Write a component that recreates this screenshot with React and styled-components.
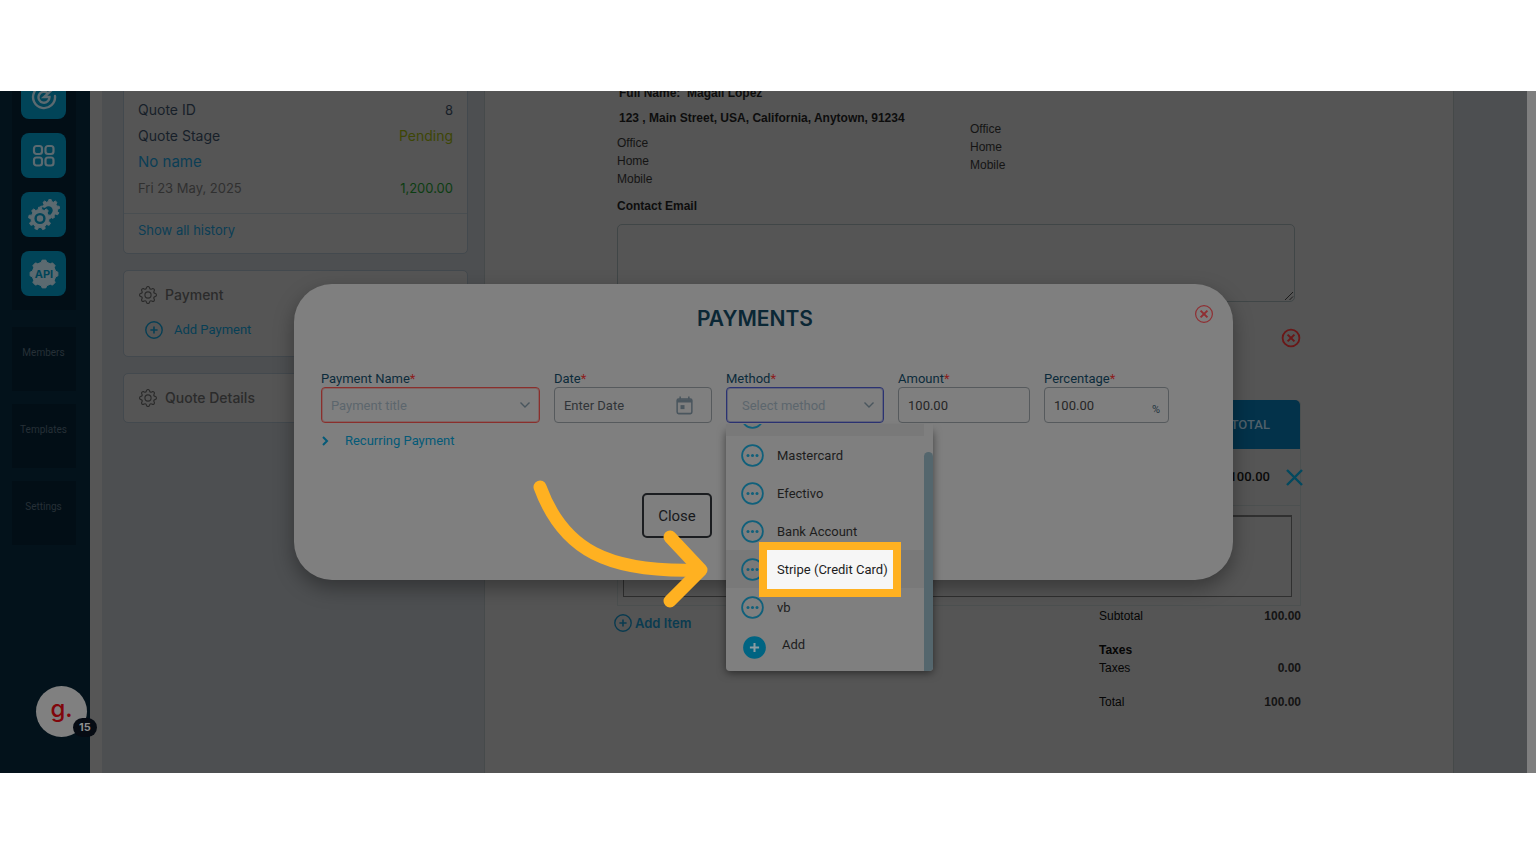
import React from "react";
import styled, { createGlobalStyle, css } from "styled-components";
import { BsGear } from "react-icons/bs";

const GlobalStyle = createGlobalStyle`
  * { box-sizing: border-box; }
  body { margin: 0; background: #fff; font-family: Roboto, "Liberation Sans", sans-serif; }
  button, input, select, textarea { font: inherit; color: inherit; margin: 0; }
  button { border: 0; padding: 0; background: none; cursor: pointer; }
  a { text-decoration: none; }
`;

const display = 'Inter, "Open Sans", sans-serif';
const arial = '"Liberation Sans", Arial, sans-serif';

/* ---------- page frame ---------- */
const Page = styled.div`
  display: flex;
  flex-direction: column;
  min-height: 100vh;
  padding: 91px 0;
`;
const Stage = styled.div`
  position: relative;
  flex: 1;
  display: flex;
  min-height: 682px;
  overflow: hidden;
  background: #4d4f51;
`;

/* ---------- sidebar ---------- */
const Sidebar = styled.nav`
  flex: 0 0 90px;
  display: flex;
  flex-direction: column;
  align-items: center;
  padding-right: 3px;
  background: #03121b;
`;
const AppButtons = styled.div`
  display: flex;
  flex-direction: column;
  gap: 14px;
  align-items: center;
  width: 64px;
  height: 236px;
  margin: -17px 0 0;
  background: #020e16;
`;
const AppButton = styled.button`
  display: grid;
  place-items: center;
  flex: none;
  width: 45px;
  height: 45px;
  border-radius: 8px;
  background: #014458;
`;
const SideLink = styled.a`
  display: grid;
  place-items: center;
  width: 64px;
  height: 64px;
  margin-top: 13px;
  padding-bottom: 14px;
  background: #020e16;
  color: #263037;
  font-size: 10px;
  &:first-of-type { margin-top: 17px; }
`;
const Rail = styled.div`
  flex: 0 0 12px;
  background: #565656;
`;

/* ---------- quote panel ---------- */
const Panel = styled.aside`
  flex: 0 0 383px;
  display: flex;
  flex-direction: column;
  gap: 16px;
  padding: 0 16px 0 21px;
  border-right: 1px solid #464a4b;
`;
const Card = styled.section`
  border: 1px solid #43494e;
  border-radius: 5px;
  background: #555;
  padding: ${p => (p.$flush ? "0" : "14px 15px")};
`;
const HistoryCard = styled(Card)`
  margin-top: -10px;
`;
const Rows = styled.div`
  padding: 15px 14px 12px;
  border-bottom: 1px solid #494e51;
`;
const Row = styled.div`
  display: flex;
  justify-content: space-between;
  font: 400 ${p => p.$size || 14}px/26px ${display};
  color: ${p => p.$color || "#171f29"};
`;
const Small = styled.span`
  font-size: ${p => p.$size || 13}px;
  color: ${p => p.$color};
`;
const HistoryLink = styled.a`
  display: block;
  padding: 3px 14px 10px;
  font: 400 13px/26px ${display};
  color: #0b3e55;
`;
const CardTitle = styled.h2`
  display: flex;
  align-items: center;
  gap: 8px;
  margin: 0;
  font: 500 14px/20px ${display};
  color: #2b2b2b;
`;
const AddPayment = styled.button`
  display: flex;
  align-items: center;
  gap: 11px;
  margin: 15px 0 2px 6px;
  font-size: 13px;
  line-height: 20px;
  color: #073f55;
`;

/* ---------- quote document ---------- */
const Doc = styled.main`
  flex: 1;
  min-width: 0;
  padding: 0 152px 0 132px;
  background: #555;
  font: 400 12px/18px ${arial};
  color: #141414;
`;
const Contacts = styled.div`
  display: grid;
  grid-template-columns: 353fr 331fr;
  margin-top: -8px;
  white-space: nowrap;
`;
const Strong = styled.div`
  font-weight: 700;
  line-height: 20px;
  padding-left: 2px;
  margin-bottom: 5px;
  color: #0d0d0d;
`;
const Lines = styled.div`
  padding-top: ${p => p.$top || 1}px;
`;
const EmailLabel = styled.label`
  display: block;
  margin: 8px 0 8px;
  font-weight: 700;
  line-height: 20px;
  color: #0d0d0d;
`;
const EmailBox = styled.textarea`
  display: block;
  width: calc(100% - 6px);
  height: 78px;
  border: 1px solid #404647;
  border-radius: 5px;
  background: transparent;
  resize: none;
`;
const EmailWrap = styled.div`
  position: relative;
`;
const Grip = styled.svg`
  position: absolute;
  right: 7px;
  bottom: 1px;
`;
const RemoveRow = styled.div`
  display: flex;
  justify-content: flex-end;
  padding: 26px 0 52px;
`;
const IconButton = styled.button`
  display: block;
  line-height: 0;
  flex: none;
`;
const Items = styled.table`
  width: 100%;
  border-spacing: 0;
  border: 1px solid #4c5050;
  border-top: 0;
  border-radius: 5px 5px 0 0;
`;
const Head = styled.th`
  height: 49px;
  padding: 0 30px;
  text-align: right;
  border-radius: 5px 5px 0 0;
  background: #03324a;
  color: #50616b;
  font: 500 13px/18px Roboto, sans-serif;
`;
const Cell = styled.td`
  padding: 0;
  ${p => p.$line && css`height: 57px; border-bottom: 1px solid #4c5050;`}
`;
const Amount = styled.div`
  display: flex;
  justify-content: flex-end;
  align-items: center;
  gap: 16px;
  margin-right: -3px;
  color: #090909;
  font: 500 13px/18px Roboto, sans-serif;
`;
const Note = styled.textarea`
  display: block;
  width: calc(100% - 13px);
  height: 82px;
  margin: 9px 7px 8px 5px;
  border: 1px solid #303030;
  border-top-width: 2px;
  background: transparent;
  resize: none;
`;
const Bottom = styled.div`
  display: flex;
  justify-content: space-between;
  align-items: flex-start;
`;
const AddItem = styled.button`
  display: flex;
  align-items: center;
  gap: 3px;
  margin: 7px 0 0 -3px;
  font: 600 13px/20px ${display};
  color: #0a3b50;
`;
const Totals = styled.dl`
  display: grid;
  grid-template-columns: 1fr auto;
  width: 202px;
  margin: 1px 0 0;
`;
const Term = styled.dt`
  margin-top: ${p => (p.$spaced ? 16 : 0)}px;
  font-weight: ${p => (p.$bold ? 700 : 400)};
  color: #050505;
`;
const Value = styled.dd`
  margin: ${p => (p.$spaced ? 16 : 0)}px 0 0;
  text-align: right;
  font-weight: 700;
  color: #141414;
`;
const Gutter = styled.div`
  flex: 0 0 74px;
  border-left: 1px solid #454949;
  background: #4d4f51;
`;
const ScrollStrip = styled.div`
  flex: 0 0 9px;
  background: #7f7f7f;
`;

/* ---------- payments dialog ---------- */
const Overlay = styled.div`
  position: absolute;
  inset: 0 9px 0 0;
  display: flex;
  align-items: center;
  justify-content: center;
`;
const Dialog = styled.div`
  width: 61.5%;
  min-width: 860px;
  border-radius: 38px;
  background: #7f7f7f;
  box-shadow: 0 8px 20px rgba(0, 0, 0, 0.35);
  padding-bottom: 42px;
`;
const DialogHead = styled.header`
  display: flex;
  align-items: flex-start;
  padding: 20px 19px 0 22px;
`;
const DialogTitle = styled.h1`
  flex: 1;
  margin: 0;
  text-align: center;
  font: 600 21px/30px ${display};
  color: #0b2735;
`;
const Columns = styled.div`
  display: grid;
  grid-template-columns: 219fr 158fr 158fr 132fr 125fr;
  column-gap: 14px;
  padding: 0 64px 0 27px;
`;
const Fields = styled(Columns)`
  margin-top: 37px;
`;
const Field = styled.div`
  position: relative;
  min-width: 0;
`;
const Label = styled.label`
  display: block;
  font-size: 13px;
  line-height: 16px;
  color: #0c2b3b;
  white-space: nowrap;
`;
const Req = styled.span`
  color: #8c1c1c;
`;
const Box = styled.div`
  position: relative;
  display: flex;
  align-items: center;
  height: 36px;
  border: 1px solid ${p => p.$border || "#565a5d"};
  border-radius: 4px;
  box-shadow: ${p => (p.$border ? `inset 0 0 0 1px ${p.$border}55` : "none")};
  color: #262626;
  font-size: 13px;
`;
const Input = styled.input`
  width: 100%;
  height: 100%;
  padding: 0 9px;
  border: 0;
  outline: 0;
  background: none;
  &::placeholder { color: #303438; opacity: 1; }
`;
const Select = styled.select`
  width: 100%;
  height: 100%;
  padding: 0 ${p => p.$pad || 9}px;
  border: 0;
  outline: 0;
  background: none;
  appearance: none;
  color: #5c666d;
`;
const Trailing = styled.span`
  position: absolute;
  right: ${p => p.$right || 8}px;
  display: flex;
  pointer-events: none;
  color: #4a565e;
`;
const Percent = styled(Trailing)`
  bottom: 4px;
  font-size: 11px;
  line-height: 16px;
  color: #1f3440;
`;
const Recurring = styled.button`
  display: flex;
  align-items: center;
  gap: 16px;
  margin: 8px 0 0 28px;
  font-size: 13px;
  line-height: 20px;
  color: #045a78;
`;
const Footer = styled(Columns)`
  margin-top: 42px;
`;
const CloseButton = styled.button`
  grid-column: 1 / 3;
  justify-self: end;
  width: 70px;
  height: 45px;
  border: 2px solid #1b1d20;
  border-radius: 5px;
  font-size: 15px;
  color: #17191c;
`;

/* ---------- method menu ---------- */
const Menu = styled.div`
  position: absolute;
  z-index: 2;
  top: 53px;
  left: 0;
  display: flex;
  width: 207px;
  height: 247px;
  overflow: hidden;
  border-radius: 0 0 4px 4px;
  background: #7f7f7f;
`;
const MenuShadow = styled.div`
  position: absolute;
  z-index: 1;
  top: 58px;
  left: 0;
  width: 207px;
  height: 242px;
  border-radius: 4px;
  box-shadow: 0 2px 8px rgba(0, 0, 0, 0.5);
`;
const Options = styled.ul`
  flex: 1;
  margin: -26px 0 0;
  padding: 0;
  list-style: none;
`;
const Option = styled.li`
  display: flex;
  align-items: center;
  gap: 13px;
  height: 38px;
  padding-left: 15px;
  background: ${p => (p.$active ? "#797979" : "transparent")};
  font-size: 13px;
  line-height: 16px;
  color: #1d1d1d;
`;
const OptionText = styled.span`
  position: relative;
  z-index: 1;
  margin-top: 2px;
  white-space: nowrap;
  ${p => p.$spot && css`
    &::before {
      content: "";
      position: absolute;
      z-index: -1;
      inset: -20px -13px -19px -18px;
      border: 8px solid #ffb121;
      background: #f6f6f6;
    }
  `}
`;
const AddOption = styled(Option)`
  gap: 16px;
  height: 42px;
  padding-left: 17px;
  ${OptionText} { margin: 0 0 4px; }
`;
const Track = styled.div`
  flex: 0 0 9px;
  padding-top: 28px;
`;
const Thumb = styled.div`
  height: 100%;
  border-radius: 5px 5px 0 0;
  background: #54666d;
`;
const Arrow = styled.svg`
  position: absolute;
  z-index: 3;
  top: 109px;
  left: -193px;
  pointer-events: none;
`;

/* ---------- help badge ---------- */
const Help = styled.button`
  position: absolute;
  left: 36px;
  bottom: 36px;
  width: 51px;
  height: 51px;
  padding-bottom: 6px;
  border-radius: 50%;
  background: #808080;
  color: #80060b;
  font: 500 24px/42px ${display};
`;
const Count = styled.span`
  position: absolute;
  right: -10px;
  bottom: 0;
  width: 24px;
  height: 19px;
  border-radius: 10px;
  background: #060b13;
  color: #8d8d8d;
  font: 700 11px/19px ${display};
`;

/* ---------- drawings ---------- */
const gearPath = (cx, cy, n, outer, inner) => {
  const pts = [];
  for (let i = 0; i < n; i++) {
    [[-0.3, inner], [-0.17, outer], [0.17, outer], [0.3, inner]].forEach(([o, r]) => {
      const a = ((i + o) / n) * Math.PI * 2 - Math.PI / 2;
      pts.push(`${(cx + Math.cos(a) * r).toFixed(2)} ${(cy + Math.sin(a) * r).toFixed(2)}`);
    });
  }
  return `M${pts.join("L")}Z`;
};
const ICON = "#5c6a70";

const TargetIcon = () => (
  <svg width="26" height="26" viewBox="0 0 26 26" fill="none" stroke={ICON} strokeWidth="2.4" strokeLinecap="round">
    <path d="M20.5 5A11 11 0 1 0 24 12" />
    <path d="M16.5 9A5.5 5.5 0 1 0 18.5 13H13L22 5" />
  </svg>
);
const GridIcon = () => (
  <svg width="24" height="24" viewBox="0 0 24 24" fill="none" stroke={ICON} strokeWidth="2.2">
    {[[2, 2], [13.5, 2], [2, 13.5], [13.5, 13.5]].map(([x, y]) => (
      <rect key={`${x}-${y}`} x={x} y={y} width="8" height="8" rx="2.5" />
    ))}
  </svg>
);
const GearsIcon = () => (
  <svg width="32" height="32" viewBox="0 0 32 32">
    <path d={gearPath(22, 10, 9, 9.6, 7.6)} fill={ICON} stroke={ICON} strokeLinejoin="round" />
    <circle cx="20.5" cy="11.5" r="4.2" fill="#014458" />
    <circle cx="12" cy="19.5" r="11.4" fill="#014458" />
    <path d={gearPath(12, 19.5, 9, 11.4, 9)} fill={ICON} stroke={ICON} strokeLinejoin="round" />
    <circle cx="12" cy="19.5" r="4.4" fill="none" stroke="#014458" strokeWidth="2.4" />
  </svg>
);
const ApiIcon = () => (
  <svg width="32" height="32" viewBox="0 0 32 32">
    <path d={gearPath(16, 16, 8, 14, 12)} fill={ICON} stroke={ICON} strokeLinejoin="round" />
    <text x="16" y="20" textAnchor="middle" fontFamily="Inter, sans-serif" fontWeight="700" fontSize="11" fill="#014458">API</text>
  </svg>
);
const PlusCircle = ({ size = 18, filled }) => (
  <svg width={size} height={size} viewBox="0 0 18 18" fill={filled ? "#006482" : "none"} stroke="currentColor" strokeWidth="1.4">
    <circle cx="9" cy="9" r="8.2" stroke={filled ? "#006482" : "currentColor"} />
    <path d="M9 5.4v7.2M5.4 9h7.2" stroke={filled ? "#8c9ca2" : "currentColor"} strokeWidth="1.6" />
  </svg>
);
const CrossCircle = ({ color, weight }) => (
  <svg width="20" height="20" viewBox="0 0 20 20" fill="none" stroke={color} strokeWidth={weight}>
    <circle cx="10" cy="10" r="8.4" />
    <path d="M6.6 6.6l6.8 6.8M13.4 6.6l-6.8 6.8" strokeWidth="2" />
  </svg>
);
const Chevron = () => (
  <svg width="12" height="8" viewBox="0 0 12 8" fill="none" stroke="currentColor" strokeWidth="1.4">
    <path d="M1.5 1.5L6 6l4.5-4.5" />
  </svg>
);
const Dots = () => (
  <svg width="23" height="23" viewBox="0 0 23 23" fill="none" stroke="#10607b" strokeWidth="1.8">
    <circle cx="11.5" cy="11.5" r="10.4" />
    <g fill="#10607b" stroke="none">
      <circle cx="7" cy="11.5" r="1.5" />
      <circle cx="11.5" cy="11.5" r="1.5" />
      <circle cx="16" cy="11.5" r="1.5" />
    </g>
  </svg>
);
const CalendarIcon = () => (
  <svg width="17" height="19" viewBox="0 0 18 20" fill="none" stroke="currentColor" strokeWidth="1.6">
    <rect x="1.2" y="3.2" width="15.6" height="15.4" rx="1.6" />
    <path d="M1 5.2h16" strokeWidth="3.2" />
    <path d="M4.4 0.5v3M13.6 0.5v3" />
    <rect x="4.8" y="9.6" width="4.2" height="4.2" fill="currentColor" stroke="none" />
  </svg>
);

const Required = ({ htmlFor, children }) => (
  <Label htmlFor={htmlFor}>{children}<Req>*</Req></Label>
);

const METHODS = ["Mastercard", "Efectivo", "Bank Account", "Stripe (Credit Card)", "vb"];

function PaymentsDialog() {
  return (
    <Overlay>
      <Dialog role="dialog" aria-labelledby="payments-title">
        <DialogHead>
          <DialogTitle id="payments-title">PAYMENTS</DialogTitle>
          <IconButton aria-label="Close dialog"><CrossCircle color="#8f2f33" weight="1.2" /></IconButton>
        </DialogHead>
        <Fields>
          <Field>
            <Required htmlFor="name">Payment Name</Required>
            <Box $border="#8a2f2c">
              <Select id="name"><option>Payment title</option></Select>
              <Trailing><Chevron /></Trailing>
            </Box>
          </Field>
          <Field>
            <Required htmlFor="date">Date</Required>
            <Box>
              <Input id="date" placeholder="Enter Date" />
              <Trailing $right={18}><CalendarIcon /></Trailing>
            </Box>
          </Field>
          <Field>
            <Required htmlFor="method">Method</Required>
            <Box $border="#2b3272">
              <Select id="method" $pad={15}><option>Select method</option></Select>
              <Trailing><Chevron /></Trailing>
            </Box>
            <MenuShadow />
            <Menu>
              <Options role="listbox" aria-label="Method">
                <Option $active><Dots /></Option>
                {METHODS.map(m => {
                  const spot = m.startsWith("Stripe");
                  return (
                    <Option key={m} role="option" aria-selected={spot} $active={spot}>
                      <Dots />
                      <OptionText $spot={spot}>{m}</OptionText>
                    </Option>
                  );
                })}
                <AddOption role="option">
                  <PlusCircle size={23} filled />
                  <OptionText>Add</OptionText>
                </AddOption>
              </Options>
              <Track><Thumb /></Track>
            </Menu>
            <Arrow width="176" height="128" viewBox="0 0 176 128" fill="none" stroke="#ffb121" strokeWidth="13" strokeLinecap="round" strokeLinejoin="round">
              <path d="M7 7C30 70 75 93 166 90" />
              <path d="M137 57L168 90L137 121" />
            </Arrow>
          </Field>
          <Field>
            <Required htmlFor="amount">Amount</Required>
            <Box><Input id="amount" defaultValue="100.00" /></Box>
          </Field>
          <Field>
            <Required htmlFor="percentage">Percentage</Required>
            <Box>
              <Input id="percentage" defaultValue="100.00" />
              <Percent>%</Percent>
            </Box>
          </Field>
        </Fields>
        <Recurring>
          <svg width="7" height="10" viewBox="0 0 7 10" fill="none" stroke="currentColor" strokeWidth="2"><path d="M1 1l4 4-4 4" /></svg>
          Recurring Payment
        </Recurring>
        <Footer><CloseButton>Close</CloseButton></Footer>
      </Dialog>
    </Overlay>
  );
}

export default function App() {
  return (
    <Page>
      <GlobalStyle />
      <Stage>
        <Sidebar>
          <AppButtons>
            <AppButton aria-label="Goals"><TargetIcon /></AppButton>
            <AppButton aria-label="Apps"><GridIcon /></AppButton>
            <AppButton aria-label="Configuration"><GearsIcon /></AppButton>
            <AppButton aria-label="API"><ApiIcon /></AppButton>
          </AppButtons>
          <SideLink href="#members">Members</SideLink>
          <SideLink href="#templates">Templates</SideLink>
          <SideLink href="#settings">Settings</SideLink>
        </Sidebar>
        <Rail />
        <Panel>
          <HistoryCard $flush>
            <Rows>
              <Row><span>Quote ID</span><Small>8</Small></Row>
              <Row><span>Quote Stage</span><Small $size={14} $color="#3d4605">Pending</Small></Row>
              <Row $size={15} $color="#0b3e55"><span>No name</span></Row>
              <Row $color="#303030"><Small>Fri 23 May, 2025</Small><Small $color="#0c3d12">1,200.00</Small></Row>
            </Rows>
            <HistoryLink href="#history">Show all history</HistoryLink>
          </HistoryCard>
          <Card>
            <CardTitle><BsGear size={18} />Payment</CardTitle>
            <AddPayment><PlusCircle />Add Payment</AddPayment>
          </Card>
          <Card>
            <CardTitle><BsGear size={18} />Quote Details</CardTitle>
          </Card>
        </Panel>
        <Doc>
          <Contacts>
            <div>
              <Strong>Full Name: &nbsp;Magali Lopez</Strong>
              <Strong>123 , Main Street, USA, California, Anytown, 91234</Strong>
              <Lines><div>Office</div><div>Home</div><div>Mobile</div></Lines>
            </div>
            <Lines $top={37}><div>Office</div><div>Home</div><div>Mobile</div></Lines>
          </Contacts>
          <EmailLabel htmlFor="email">Contact Email</EmailLabel>
          <EmailWrap>
            <EmailBox id="email" />
            <Grip width="10" height="10" viewBox="0 0 10 10" stroke="#1c1c1c"><path d="M1 9L9 1M5.5 9L9 5.5" /></Grip>
          </EmailWrap>
          <RemoveRow>
            <IconButton aria-label="Remove section"><CrossCircle color="#6a1717" weight="1.8" /></IconButton>
          </RemoveRow>
          <Items>
            <thead><tr><Head>TOTAL</Head></tr></thead>
            <tbody>
              <tr>
                <Cell $line>
                  <Amount>
                    100.00
                    <IconButton aria-label="Remove item">
                      <svg width="17" height="17" viewBox="0 0 17 17" stroke="#03495f" strokeWidth="2.4"><path d="M1 1l15 15M16 1L1 16" /></svg>
                    </IconButton>
                  </Amount>
                </Cell>
              </tr>
              <tr><Cell><Note aria-label="Item description" /></Cell></tr>
            </tbody>
          </Items>
          <Bottom>
            <AddItem><PlusCircle />Add Item</AddItem>
            <Totals>
              <Term>Subtotal</Term><Value>100.00</Value>
              <Term $spaced $bold>Taxes</Term><Value $spaced />
              <Term>Taxes</Term><Value>0.00</Value>
              <Term $spaced>Total</Term><Value $spaced>100.00</Value>
            </Totals>
          </Bottom>
        </Doc>
        <Gutter />
        <ScrollStrip />
        <PaymentsDialog />
        <Help aria-label="Help, 15 notifications">g.<Count>15</Count></Help>
      </Stage>
    </Page>
  );
}
